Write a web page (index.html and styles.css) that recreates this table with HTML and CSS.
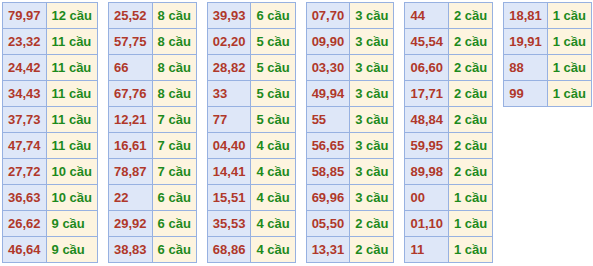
FILE: index.html
```html
<!DOCTYPE html>
<html lang="vi">
<head>
<meta charset="utf-8">
<title>Thống kê cầu</title>
<link rel="stylesheet" href="styles.css">
</head>
<body>
<div class="wrap">
  <table class="tk">
    <tr><td class="num">79,97</td><td class="cnt">12 cầu</td></tr>
    <tr><td class="num">23,32</td><td class="cnt">11 cầu</td></tr>
    <tr><td class="num">24,42</td><td class="cnt">11 cầu</td></tr>
    <tr><td class="num">34,43</td><td class="cnt">11 cầu</td></tr>
    <tr><td class="num">37,73</td><td class="cnt">11 cầu</td></tr>
    <tr><td class="num">47,74</td><td class="cnt">11 cầu</td></tr>
    <tr><td class="num">27,72</td><td class="cnt">10 cầu</td></tr>
    <tr><td class="num">36,63</td><td class="cnt">10 cầu</td></tr>
    <tr><td class="num">26,62</td><td class="cnt">9 cầu</td></tr>
    <tr><td class="num">46,64</td><td class="cnt">9 cầu</td></tr>
  </table>
  <table class="tk">
    <tr><td class="num">25,52</td><td class="cnt">8 cầu</td></tr>
    <tr><td class="num">57,75</td><td class="cnt">8 cầu</td></tr>
    <tr><td class="num">66</td><td class="cnt">8 cầu</td></tr>
    <tr><td class="num">67,76</td><td class="cnt">8 cầu</td></tr>
    <tr><td class="num">12,21</td><td class="cnt">7 cầu</td></tr>
    <tr><td class="num">16,61</td><td class="cnt">7 cầu</td></tr>
    <tr><td class="num">78,87</td><td class="cnt">7 cầu</td></tr>
    <tr><td class="num">22</td><td class="cnt">6 cầu</td></tr>
    <tr><td class="num">29,92</td><td class="cnt">6 cầu</td></tr>
    <tr><td class="num">38,83</td><td class="cnt">6 cầu</td></tr>
  </table>
  <table class="tk">
    <tr><td class="num">39,93</td><td class="cnt">6 cầu</td></tr>
    <tr><td class="num">02,20</td><td class="cnt">5 cầu</td></tr>
    <tr><td class="num">28,82</td><td class="cnt">5 cầu</td></tr>
    <tr><td class="num">33</td><td class="cnt">5 cầu</td></tr>
    <tr><td class="num">77</td><td class="cnt">5 cầu</td></tr>
    <tr><td class="num">04,40</td><td class="cnt">4 cầu</td></tr>
    <tr><td class="num">14,41</td><td class="cnt">4 cầu</td></tr>
    <tr><td class="num">15,51</td><td class="cnt">4 cầu</td></tr>
    <tr><td class="num">35,53</td><td class="cnt">4 cầu</td></tr>
    <tr><td class="num">68,86</td><td class="cnt">4 cầu</td></tr>
  </table>
  <table class="tk">
    <tr><td class="num">07,70</td><td class="cnt">3 cầu</td></tr>
    <tr><td class="num">09,90</td><td class="cnt">3 cầu</td></tr>
    <tr><td class="num">03,30</td><td class="cnt">3 cầu</td></tr>
    <tr><td class="num">49,94</td><td class="cnt">3 cầu</td></tr>
    <tr><td class="num">55</td><td class="cnt">3 cầu</td></tr>
    <tr><td class="num">56,65</td><td class="cnt">3 cầu</td></tr>
    <tr><td class="num">58,85</td><td class="cnt">3 cầu</td></tr>
    <tr><td class="num">69,96</td><td class="cnt">3 cầu</td></tr>
    <tr><td class="num">05,50</td><td class="cnt">2 cầu</td></tr>
    <tr><td class="num">13,31</td><td class="cnt">2 cầu</td></tr>
  </table>
  <table class="tk">
    <tr><td class="num">44</td><td class="cnt">2 cầu</td></tr>
    <tr><td class="num">45,54</td><td class="cnt">2 cầu</td></tr>
    <tr><td class="num">06,60</td><td class="cnt">2 cầu</td></tr>
    <tr><td class="num">17,71</td><td class="cnt">2 cầu</td></tr>
    <tr><td class="num">48,84</td><td class="cnt">2 cầu</td></tr>
    <tr><td class="num">59,95</td><td class="cnt">2 cầu</td></tr>
    <tr><td class="num">89,98</td><td class="cnt">2 cầu</td></tr>
    <tr><td class="num">00</td><td class="cnt">1 cầu</td></tr>
    <tr><td class="num">01,10</td><td class="cnt">1 cầu</td></tr>
    <tr><td class="num">11</td><td class="cnt">1 cầu</td></tr>
  </table>
  <table class="tk">
    <tr><td class="num">18,81</td><td class="cnt">1 cầu</td></tr>
    <tr><td class="num">19,91</td><td class="cnt">1 cầu</td></tr>
    <tr><td class="num">88</td><td class="cnt">1 cầu</td></tr>
    <tr><td class="num">99</td><td class="cnt">1 cầu</td></tr>
  </table>
</div>
</body>
</html>
```
FILE: styles.css
```css
html, body {
  margin: 0;
  padding: 0;
  background: #ffffff;
}
body {
  font-family: "Liberation Sans", Arial, sans-serif;
  font-size: 13px;
  font-weight: bold;
}
.wrap {
  display: flex;
  align-items: flex-start;
  gap: 10px;
  padding: 2px 0 0 2px;
}
.tk {
  border-collapse: collapse;
  flex: none;
}
.tk td {
  border: 1px solid #97b1e1;
  height: 25px;
  padding: 0 5px;
  vertical-align: middle;
  white-space: nowrap;
  text-align: left;
}
.tk td.num {
  background: #dee7f8;
  color: #b0382a;
  min-width: 32px;
}
.tk td.cnt {
  background: #fdf4df;
  color: #1d8a1d;
}
```
